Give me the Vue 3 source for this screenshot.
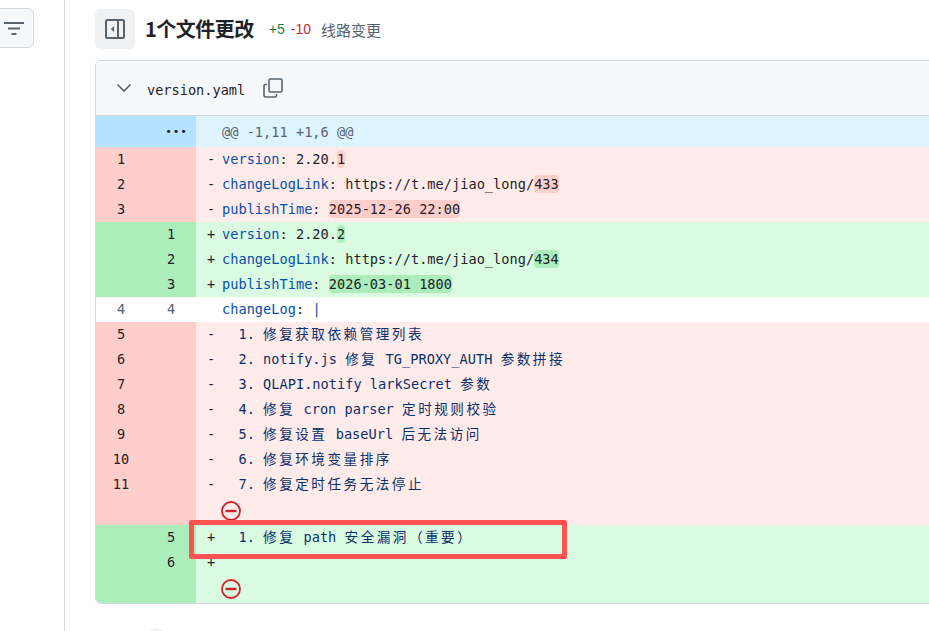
<script setup>
const cjk = /([\u3000-\u9fff\uff00-\uffef]+)/
function parts(s) {
  return s.split(cjk).filter(Boolean).map(t => ({ t, c: cjk.test(t) }))
}
const rows = [
  { o: '1', n: '', k: 'del', s: '-', key: 'version', rest: ': 2.20.', mark: '1' },
  { o: '2', n: '', k: 'del', s: '-', key: 'changeLogLink', rest: ': https://t.me/jiao_long/', mark: '433' },
  { o: '3', n: '', k: 'del', s: '-', key: 'publishTime', rest: ': ', mark: '2025-12-26 22:00' },
  { o: '', n: '1', k: 'add', s: '+', key: 'version', rest: ': 2.20.', mark: '2' },
  { o: '', n: '2', k: 'add', s: '+', key: 'changeLogLink', rest: ': https://t.me/jiao_long/', mark: '434' },
  { o: '', n: '3', k: 'add', s: '+', key: 'publishTime', rest: ': ', mark: '2026-03-01 1800' },
  { o: '4', n: '4', k: 'ctx', s: '', key: 'changeLog', rest: ': ', pipe: true },
  { o: '5', n: '', k: 'del', s: '-', text: '  1. 修复获取依赖管理列表' },
  { o: '6', n: '', k: 'del', s: '-', text: '  2. notify.js 修复 TG_PROXY_AUTH 参数拼接' },
  { o: '7', n: '', k: 'del', s: '-', text: '  3. QLAPI.notify larkSecret 参数' },
  { o: '8', n: '', k: 'del', s: '-', text: '  4. 修复 cron parser 定时规则校验' },
  { o: '9', n: '', k: 'del', s: '-', text: '  5. 修复设置 baseUrl 后无法访问' },
  { o: '10', n: '', k: 'del', s: '-', text: '  6. 修复环境变量排序' },
  { o: '11', n: '', k: 'del', s: '-', text: '  7. 修复定时任务无法停止' },
  { o: '', n: '', k: 'del', icon: true },
  { o: '', n: '5', k: 'add', s: '+', text: '  1. 修复 path 安全漏洞（重要）' },
  { o: '', n: '6', k: 'add', s: '+', text: '' },
  { o: '', n: '', k: 'add', icon: true },
]
</script>

<template>
  <div class="page">
    <aside class="side">
      <button class="filter">
        <svg width="20" height="16" viewBox="0 0 20 16"><path d="M0 3h20M4 8.500h12M7.500 14h5" stroke="#59636e" stroke-width="2" fill="none"/></svg>
      </button>
    </aside>
    <main class="main">
      <div class="head">
        <div class="toggle">
          <svg width="20" height="20" viewBox="0 0 20 20" fill="none"><rect x="1" y="1" width="18" height="18" rx="1.500" stroke="#59636e" stroke-width="2"/><path d="M13 1v18" stroke="#59636e" stroke-width="2"/><path d="M9 7v6L5.800 10z" fill="#59636e"/></svg>
        </div>
        <h2 class="title">1个文件更改</h2>
        <span class="plus">+5</span>
        <span class="minus">-10</span>
        <span class="lines">线路变更</span>
      </div>
      <section class="card">
        <div class="file">
          <svg class="chev" width="16" height="10" viewBox="0 0 16 10" fill="none"><path d="M1.500 1.500 8 8l6.500-6.500" stroke="#59636e" stroke-width="1.600"/></svg>
          <span class="name">version.yaml</span>
          <svg width="20" height="20" viewBox="0 0 20 20" fill="none" stroke="#59636e" stroke-width="1.600"><path d="M4 6.500H2.500a1.500 1.500 0 0 0-1.500 1.500v9.500A1.500 1.500 0 0 0 2.500 19H12a1.500 1.500 0 0 0 1.500-1.500V16"/><rect x="6" y="1" width="13" height="13" rx="1.500"/></svg>
        </div>
        <div class="row hunk">
          <div class="gut"><span class="dots">•••</span></div>
          <div class="code">@@ -1,11 +1,6 @@</div>
        </div>
        <div v-for="(r, i) in rows" :key="i" class="row" :class="[r.k, { tall: r.icon }]">
          <div class="gut">
            <span class="num">{{ r.o }}</span><span class="num">{{ r.n }}</span>
          </div>
          <div class="code">
            <svg v-if="r.icon" class="stop" width="20" height="20" viewBox="0 0 20 20" fill="none"><circle cx="10" cy="10" r="9" stroke="#cf222e" stroke-width="1.800"/><path d="M4.500 10h11" stroke="#cf222e" stroke-width="2.400"/></svg>
            <template v-else>
              <span class="sign">{{ r.s }}</span>
              <span class="txt">
                <template v-if="r.key">
                  <span class="key">{{ r.key }}</span>{{ r.rest }}<span v-if="r.mark" class="mark">{{ r.mark }}</span><span v-if="r.pipe" class="pipe">|</span>
                </template>
                <span v-else class="item"><template v-for="(p, j) in parts(r.text)" :key="j"><span :class="{ cj: p.c }">{{ p.t }}</span></template></span>
              </span>
            </template>
          </div>
        </div>
      </section>
      <div class="next"><span class="dot"></span></div>
    </main>
    <div class="callout"></div>
  </div>
</template>

<style>
html, body { margin: 0; overflow: hidden; background: #fff; }
</style>

<style scoped>
.page { position: relative; width: 929px; height: 631px; overflow: hidden; display: flex; background: #fff; color: #1f2328; font-family: "Liberation Sans", "Noto Sans CJK SC", sans-serif; }
.side { width: 64px; flex: none; border-right: 1px solid #d1d9e0; box-sizing: content-box; height: 631px; position: relative; }
.filter { position: absolute; left: -8px; top: 8px; width: 42px; height: 40px; padding: 0 0 0 1px; border: 1px solid #d1d9e0; border-radius: 6px; background: #f6f8fa; display: flex; align-items: center; justify-content: center; box-sizing: border-box; }
.main { flex: none; width: 1000px; padding: 9px 0 0 30px; box-sizing: border-box; }
.head { display: flex; align-items: center; height: 40px; margin-bottom: 11px; }
.toggle { width: 40px; height: 40px; background: #eff1f3; border-radius: 6px; display: flex; align-items: center; justify-content: center; margin-right: 10px; }
.title { font-size: 20px; font-weight: 700; letter-spacing: -0.5px; margin: 0 15px 0 0; line-height: 40px; font-family: "Noto Sans CJK SC", sans-serif; color: #1f2328; }
.plus { color: #1a7f37; font-size: 14px; margin-right: 6px; }
.minus { color: #d1242f; font-size: 14px; margin-right: 10px; }
.lines { color: #59636e; font-size: 15px; font-family: "Noto Sans CJK SC", sans-serif; }
.card { border: 1px solid #d1d9e0; border-radius: 6px; overflow: hidden; }
.file { height: 55px; box-sizing: border-box; background: #f6f8fa; border-bottom: 1px solid #d1d9e0; display: flex; align-items: center; padding-left: 20px; }
.chev { margin-right: 15px; }
.name { font: 13.6px "DejaVu Sans Mono", monospace; margin: 3px 18px 0 0; color: #1f2328; }
.row { display: flex; height: 25px; font: 13.6px/24px "DejaVu Sans Mono", "Noto Sans CJK SC", monospace; letter-spacing: 0.03px; }
.row.tall { height: 28px; }
.gut { width: 100px; flex: none; display: flex; color: #1f2328; }
.num { width: 50px; text-align: center; }
.code { flex: 1; display: flex; white-space: pre; padding-left: 11px; position: relative; }
.sign { width: 15px; flex: none; }
.hunk { height: 31px; }
.hunk .gut { background: #b6e3ff; justify-content: flex-end; padding-right: 8px; box-sizing: border-box; line-height: 31px; font-size: 11px; letter-spacing: 0; }
.hunk .code { background: #ddf4ff; color: #59636e; line-height: 32px; padding-left: 26px; }
.dots { color: #1f2328; letter-spacing: 1px; }
.del .gut { background: #ffcecb; }
.del .code { background: #ffebe9; }
.add .gut { background: #aceebb; }
.add .code { background: #dafbe1; }
.ctx .gut { color: #59636e; }
.ctx .gut, .ctx .code { background: #fff; }
.key { color: #0550ae; }
.item { color: #0a3069; }
.cj { letter-spacing: 2.5px; line-height: 1; font-family: "Noto Sans CJK SC", sans-serif; }
.mark { border-radius: 4px; padding: 1px 0; }
.del .mark { background: #ffcecb; }
.add .mark { background: #aceebb; }
.pipe { color: #0550ae; }
.stop { position: absolute; left: 25px; top: 4px; }
.next { margin-top: 24px; padding-left: 52px; }
.dot { display: block; width: 20px; height: 20px; border-radius: 10px; background: #eff1f3; }
.callout { position: absolute; left: 189px; top: 520px; width: 378px; height: 39px; box-sizing: border-box; border: 5px solid #ff5252; border-radius: 2px; }
</style>
